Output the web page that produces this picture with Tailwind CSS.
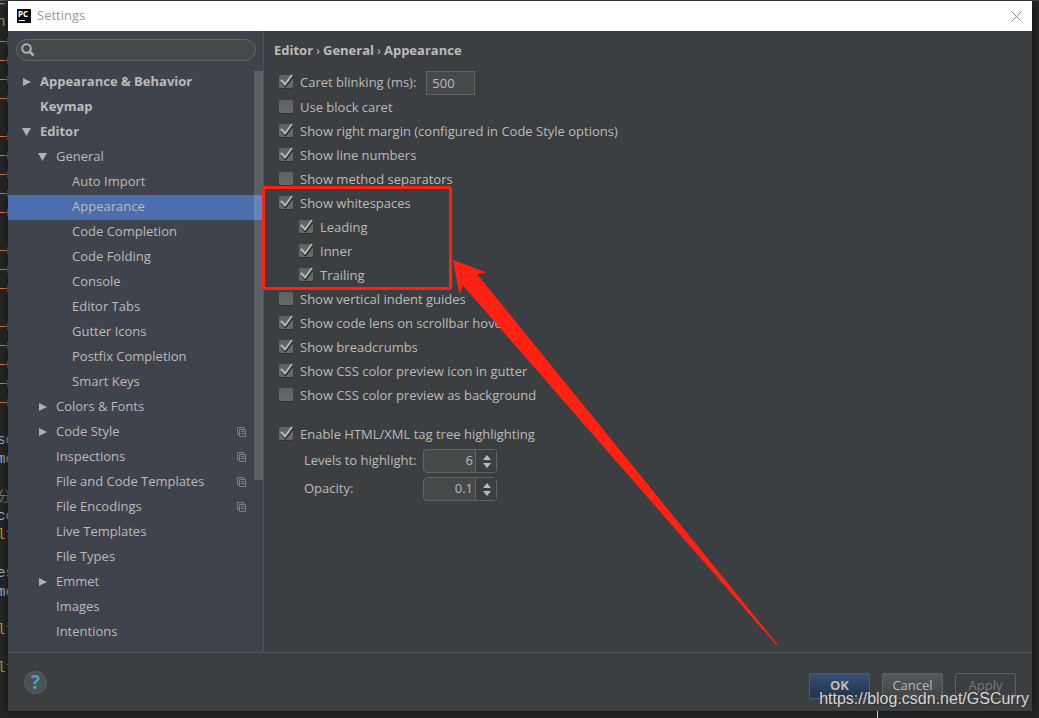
<!DOCTYPE html>
<html lang="en">
<head>
    <meta charset="UTF-8">
    <meta name="viewport" content="width=device-width, initial-scale=1.0">
    <title>Settings</title>
    <script src="https://cdn.jsdelivr.net/npm/@tailwindcss/browser@4"></script>
</head>
<body class="relative flex h-screen flex-col overflow-hidden bg-[#262626] font-['Open_Sans','Noto_Sans_CJK_SC',sans-serif] text-[13px] text-[#bbbbbb]">
    <!-- Shared icons -->
    <svg class="hidden">
        <symbol id="right" viewBox="0 0 10 10"><path d="M1 1v8l8-4z" fill="#afb1b3"/></symbol>
        <symbol id="down" viewBox="0 0 10 10"><path d="M0 1h9l-4.500 8z" fill="#afb1b3"/></symbol>
        <symbol id="copy" viewBox="0 0 10 10"><path d="M2.500 7.500h-2v-7h6v2M2.500 2.500h6v7h-6zM4 4.500h3.500M4 6.500h3.500" fill="none" stroke="#7c8086"/></symbol>
        <symbol id="check" viewBox="0 0 16 16">
            <path d="M3.500 7.500l4 4.500 7-9.500" fill="none" stroke="#2b2b2b" stroke-width="2.500"/>
            <path d="M3 6l4 4.500 7-9.500" fill="none" stroke="#b8b8b8" stroke-width="2"/>
        </symbol>
        <symbol id="spin-up" viewBox="0 0 8 5"><path d="M4 0l4 5H0z" fill="#bbbbbb"/></symbol>
        <symbol id="spin-down" viewBox="0 0 8 5"><path d="M4 5l4-5H0z" fill="#bbbbbb"/></symbol>
    </svg>

    <div class="h-px shrink-0 bg-[#454545]"></div>

    <div class="flex min-h-0 flex-1">
        <!-- Editor behind the dialog -->
        <div class="-mt-[7px] w-2 shrink-0 overflow-hidden whitespace-nowrap font-['Liberation_Mono','Noto_Sans_CJK_SC',monospace] text-[14px] leading-[19px]" id="gutter">
            <div class="-ml-[3px] h-[19px] text-[#d07b45]">=</div>
            <div class="-ml-[3px] h-[19px] text-[#b9a35c]">n</div>
        </div>

        <!-- Settings dialog -->
        <main class="mb-[7px] flex min-w-0 flex-1 flex-col bg-[#3c3f41] shadow-[0_0_8px_#151515]">
            <header class="flex h-[30px] shrink-0 items-center gap-1.5 bg-white pl-[9px] pr-2.5">
                <svg class="size-[14px]" viewBox="0 0 14 14">
                    <rect width="14" height="14" fill="#0b0b0b"/>
                    <text x="1" y="8" font-size="8" font-weight="700" fill="#ffffff" font-family="Open Sans, sans-serif">PC</text>
                    <path d="M2 11.500h6" stroke="#ffffff"/>
                </svg>
                <h1 class="flex-1 text-[#999999]">Settings</h1>
                <button type="button" aria-label="Close">
                    <svg class="size-[11px]" viewBox="0 0 11 11"><path d="M.5.5l10 10M10.500.5l-10 10" stroke="#8a8a8a" fill="none"/></svg>
                </button>
            </header>

            <div class="flex min-h-0 flex-1">
                <aside class="relative flex w-64 shrink-0 flex-col overflow-hidden border-r border-[#515456] bg-[#3f434c] pt-2">
                    <label class="mx-2 mr-[7px] flex h-[22px] shrink-0 items-center gap-1 rounded-full border border-[#646666] bg-[#45494a] px-1">
                        <svg class="size-[14px]" viewBox="0 0 14 14"><circle cx="5.500" cy="5.500" r="4.300" fill="none" stroke="#afb1b3" stroke-width="2"/><path d="M8.500 8.500l4 4" stroke="#afb1b3" stroke-width="2.500"/></svg>
                        <input type="search" aria-label="Search settings" class="min-w-0 flex-1 bg-transparent outline-none">
                    </label>
                    <ul id="tree" class="mt-[9px]"></ul>
                    <div class="absolute right-0 top-10 h-[409px] w-[9px] bg-white/15"></div>
                </aside>

                <form class="min-w-0 flex-1 pl-2.5">
                    <nav class="mt-2 flex h-6 items-center gap-[3px] font-bold">
                        <span>Editor</span><span class="font-normal">›</span><span>General</span><span class="font-normal">›</span><span>Appearance</span>
                    </nav>
                    <div class="mt-2 pl-1">
                        <div class="flex items-center gap-2.5">
                            <label class="flex h-6 items-center gap-1.5">
                                <span class="mb-0.5 grid size-4">
                                    <input type="checkbox" checked class="peer col-start-1 row-start-1 m-px size-[14px] appearance-none rounded-xs border-b border-[#2f3133] bg-linear-to-b from-[#5f6263] to-[#6a6a6a]">
                                    <svg class="invisible col-start-1 row-start-1 size-4 peer-checked:visible"><use href="#check"/></svg>
                                </span>
                                Caret blinking (ms):
                            </label>
                            <input type="text" value="500" aria-label="Caret blinking (ms)" class="h-6 w-[49px] border border-[#646464] bg-[#45494a] px-[5px] outline-none">
                        </div>
                        <div id="options" class="mt-px"></div>
                    </div>

                    <div class="mt-[15px] pl-1">
                        <label class="flex h-6 items-center gap-1.5">
                            <span class="mb-0.5 grid size-4">
                                <input type="checkbox" checked class="peer col-start-1 row-start-1 m-px size-[14px] appearance-none rounded-xs border-b border-[#2f3133] bg-linear-to-b from-[#5f6263] to-[#6a6a6a]">
                                <svg class="invisible col-start-1 row-start-1 size-4 peer-checked:visible"><use href="#check"/></svg>
                            </span>
                            Enable HTML/XML tag tree highlighting
                        </label>
                        <div class="mt-0.5 grid w-fit grid-cols-[119px_74px] items-center gap-y-1 pl-[26px]">
                            <label for="levels">Levels to highlight:</label>
                            <div class="flex h-6 rounded-sm border border-[#646464] bg-[#45494a]">
                                <input id="levels" type="text" value="6" class="min-w-0 flex-1 px-0.5 text-right outline-none">
                                <div class="flex w-[21px] flex-col items-center justify-center gap-[3px] border-l border-[#646464] bg-[#3c3f41] pl-0.5">
                                    <button type="button" aria-label="More levels"><svg class="h-[5px] w-2"><use href="#spin-up"/></svg></button>
                                    <button type="button" aria-label="Fewer levels"><svg class="h-[5px] w-2"><use href="#spin-down"/></svg></button>
                                </div>
                            </div>
                            <label for="opacity">Opacity:</label>
                            <div class="flex h-6 rounded-sm border border-[#646464] bg-[#45494a]">
                                <input id="opacity" type="text" value="0.1" class="min-w-0 flex-1 px-0.5 text-right outline-none">
                                <div class="flex w-[21px] flex-col items-center justify-center gap-[3px] border-l border-[#646464] bg-[#3c3f41] pl-0.5">
                                    <button type="button" aria-label="More opaque"><svg class="h-[5px] w-2"><use href="#spin-up"/></svg></button>
                                    <button type="button" aria-label="Less opaque"><svg class="h-[5px] w-2"><use href="#spin-down"/></svg></button>
                                </div>
                            </div>
                        </div>
                    </div>
                </form>
            </div>

            <footer class="flex h-[59px] shrink-0 items-center gap-3 border-t border-[#515456] px-4">
                <button type="button" aria-label="Help" class="mr-auto size-[23px] rounded-full border border-[#5e6163] bg-[#4b5052] text-[19px] leading-5 font-bold text-[#4a9fd0]">?</button>
                <button type="button" class="mt-2 h-[26px] w-[61px] rounded-xs border border-[#4c5d70] bg-linear-to-b from-[#365074] to-[#233248] font-bold">OK</button>
                <button type="button" class="mt-2 h-[26px] w-[61px] rounded-xs border border-[#5e6060] bg-linear-to-b from-[#525758] to-[#414546]">Cancel</button>
                <button type="button" disabled class="mt-2 h-[26px] w-[61px] rounded-xs border border-[#5e6060] text-[#777777]">Apply</button>
            </footer>
        </main>
        <div class="w-[7px] shrink-0"></div>
    </div>

    <!-- Annotation: red frame and arrow -->
    <svg class="pointer-events-none absolute left-0 top-0 h-[718px] w-[1039px]" viewBox="0 0 1039 718">
        <rect x="263.500" y="187.500" width="187" height="101" rx="1.500" fill="none" stroke="#ff2213" stroke-width="3"/>
        <path d="M453 260l33.500 12.500-9.500 1.500 301 371-1 .8L463 285.500l-3.500 9.500z" fill="#ff2213"/>
        <path d="M877.500 711v7" stroke="#d0d0d0"/>
    </svg>
    <p class="absolute bottom-2.5 right-2.5 font-['Liberation_Sans',sans-serif] text-[16px] leading-[18px] text-[#d4d4d4] [text-shadow:1px_1px_1px_#333333]">https://blog.csdn.net/GSCurry</p>

    <script>
        // depth, label, arrow, has the project-level icon
        const tree = [
            [0, 'Appearance & Behavior', 'right'],
            [0, 'Keymap'],
            [0, 'Editor', 'down'],
            [1, 'General', 'down'],
            [2, 'Auto Import'],
            [2, 'Appearance'],
            [2, 'Code Completion'],
            [2, 'Code Folding'],
            [2, 'Console'],
            [2, 'Editor Tabs'],
            [2, 'Gutter Icons'],
            [2, 'Postfix Completion'],
            [2, 'Smart Keys'],
            [1, 'Colors & Fonts', 'right'],
            [1, 'Code Style', 'right', true],
            [1, 'Inspections', '', true],
            [1, 'File and Code Templates', '', true],
            [1, 'File Encodings', '', true],
            [1, 'Live Templates'],
            [1, 'File Types'],
            [1, 'Emmet', 'right'],
            [1, 'Images'],
            [1, 'Intentions'],
            [1, 'Language Injections'],
        ];
        const depthClass = ['pl-[14px] font-bold', 'pl-[30px]', 'pl-[46px]'];

        document.getElementById('tree').innerHTML = tree.map(([depth, label, arrow, copy]) => `
            <li class="flex h-[25px] items-center gap-2 pr-4 pb-0.5 ${depthClass[depth]} ${depth === 2 && label === 'Appearance' ? 'bg-[#4b6eaf]' : ''}">
                <svg class="size-2.5 shrink-0">${arrow ? `<use href="#${arrow}"/>` : ''}</svg>
                <span class="flex-1 whitespace-nowrap">${label.replace('&', '&amp;')}</span>
                ${copy ? '<svg class="size-2.5 shrink-0"><use href="#copy"/></svg>' : ''}
            </li>`).join('');

        // label, checked, nested
        const options = [
            ['Use block caret', false],
            ['Show right margin (configured in Code Style options)', true],
            ['Show line numbers', true],
            ['Show method separators', false],
            ['Show whitespaces', true],
            ['Leading', true, true],
            ['Inner', true, true],
            ['Trailing', true, true],
            ['Show vertical indent guides', false],
            ['Show code lens on scrollbar hover', true],
            ['Show breadcrumbs', true],
            ['Show CSS color preview icon in gutter', true],
            ['Show CSS color preview as background', false],
        ];

        document.getElementById('options').innerHTML = options.map(([label, checked, nested]) => `
            <label class="flex h-6 items-center gap-1.5 ${nested ? 'pl-5' : ''}">
                <span class="mb-0.5 grid size-4">
                    <input type="checkbox" ${checked ? 'checked' : ''} class="peer col-start-1 row-start-1 m-px size-[14px] appearance-none rounded-xs border-b border-[#2f3133] bg-linear-to-b from-[#5f6263] to-[#6a6a6a]">
                    <svg class="invisible col-start-1 row-start-1 size-4 peer-checked:visible"><use href="#check"/></svg>
                </span>
                ${label}
            </label>`).join('');

        // One entry per editor line: '-' draws a tab mark, '' is a blank line
        const lines = ['-', '-', '-', '-', '', '-', '-', '-', '-', '-', '', '-', '-', '-', '', '-', '-', '-', '-', '-', '',
            'se', 'me', '', '分', 'co', 'lf', '', 'es', 'me', '', 'lf', '', 'lf'];
        const lineColor = {
            se: 'text-[#8abeb7]', es: 'text-[#8abeb7]', me: 'text-[#a9b7c6]', co: 'text-[#a9b7c6]',
            lf: 'text-[#d98f20]', '分': 'text-[#808080]',
        };

        document.getElementById('gutter').innerHTML += lines.map(line => line === '-'
            ? '<div class="flex h-[19px] items-center"><i class="h-px flex-1 bg-[#e07a50]"></i><i class="h-[7px] w-px bg-[#a05a40]"></i></div>'
            : `<div class="-ml-[3px] h-[19px] ${lineColor[line] || ''}">${line}</div>`).join('');
    </script>
</body>
</html>
